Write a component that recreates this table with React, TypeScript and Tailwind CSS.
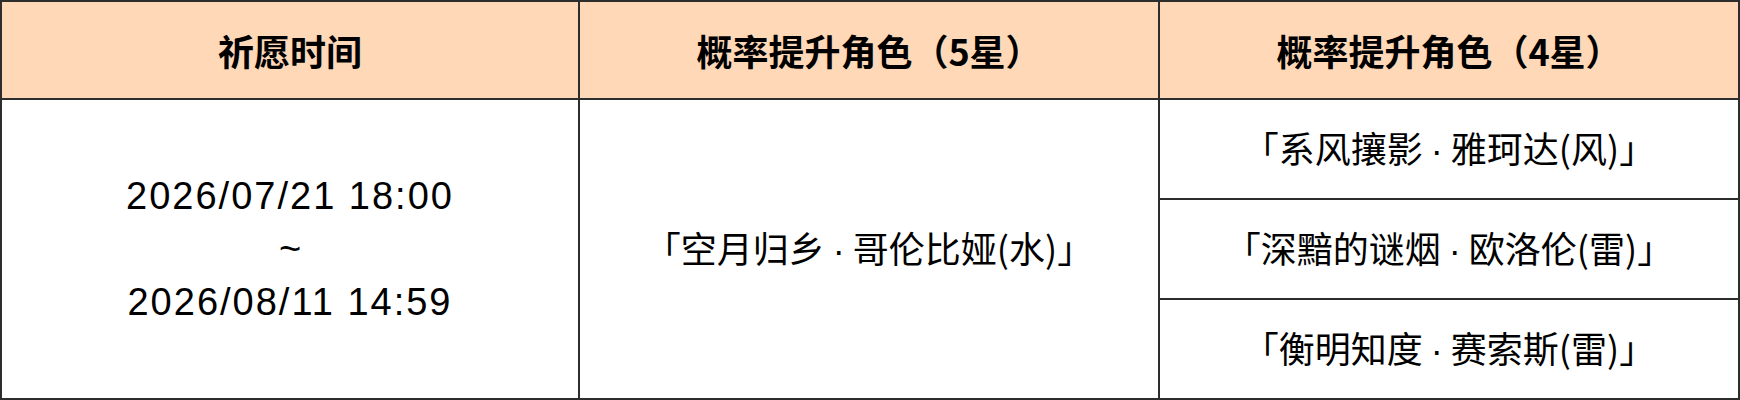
import React from "react";

const cjk = { fontFamily: '"Noto Sans CJK SC", "Noto Sans", sans-serif' };
const latin = { fontFamily: '"Liberation Sans", Arial, "Noto Sans CJK SC", sans-serif' };

function Name({ a, b }: { a: string; b: string }) {
  return (
    <span>
      {a}
      <span className="px-[8px]" style={latin}>
        ·
      </span>
      {b}
    </span>
  );
}

export default function App() {
  const four: [string, string][] = [
    ["「系风攘影", "雅珂达(风)」"],
    ["「深黯的谜烟", "欧洛伦(雷)」"],
    ["「衡明知度", "赛索斯(雷)」"],
  ];
  return (
    <div className="w-[1740px] h-[400px] bg-white">
      <div
        className="grid w-[1740px] h-[400px] bg-[#2d2d2d] p-[2px] gap-[2px] grid-cols-[576px_578px_578px] grid-rows-[96px_98px_98px_98px] text-black"
        style={cjk}
      >
        <div className="bg-[#ffd8b8] flex items-center justify-center text-[36px] font-bold">
          祈愿时间
        </div>
        <div className="bg-[#ffd8b8] flex items-center justify-center text-[36px] font-bold">
          概率提升角色（5星）
        </div>
        <div className="bg-[#ffd8b8] flex items-center justify-center text-[36px] font-bold">
          概率提升角色（4星）
        </div>

        <div
          className="bg-white row-span-3 flex flex-col items-center justify-center text-[38px] leading-[53px] tracking-[2px]"
          style={latin}
        >
          <div>2026/07/21 18:00</div>
          <div className="tracking-normal">~</div>
          <div>2026/08/11 14:59</div>
        </div>
        <div className="bg-white row-span-3 flex items-center justify-center text-[36px]">
          <Name a="「空月归乡" b="哥伦比娅(水)」" />
        </div>
        {four.map(([a, b]) => (
          <div key={a} className="bg-white flex items-center justify-center text-[36px]">
            <Name a={a} b={b} />
          </div>
        ))}
      </div>
    </div>
  );
}
